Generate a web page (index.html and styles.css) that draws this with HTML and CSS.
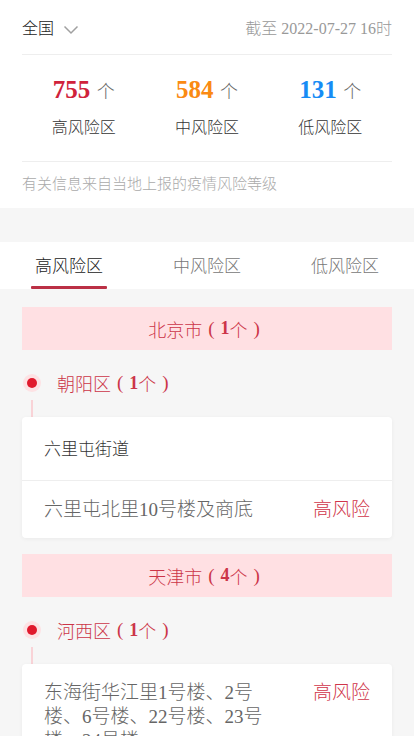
FILE: index.html
```html
<!DOCTYPE html>
<html lang="zh">
<head>
<meta charset="utf-8">
<title>风险等级</title>
<link rel="stylesheet" href="styles.css">
</head>
<body>
<div class="top">
  <div class="header">
    <div class="region">全国
      <svg class="chev" width="16" height="10" viewBox="0 0 16 10"><polyline points="1.5,1.5 8,8 14.5,1.5" fill="none" stroke="#a0a0a0" stroke-width="1.5"/></svg>
    </div>
    <div class="time">截至 2022-07-27 16时</div>
  </div>
  <div class="stats">
    <div class="stat"><div class="num"><b class="high">755</b> 个</div><div class="label">高风险区</div></div>
    <div class="stat"><div class="num"><b class="mid">584</b> 个</div><div class="label">中风险区</div></div>
    <div class="stat"><div class="num"><b class="low">131</b> 个</div><div class="label">低风险区</div></div>
  </div>
  <div class="note">有关信息来自当地上报的疫情风险等级</div>
</div>

<div class="tabs">
  <div class="tab active">高风险区</div>
  <div class="tab">中风险区</div>
  <div class="tab">低风险区</div>
</div>

<div class="list">
  <div class="city">北京市<span class="p">(</span><b>1</b>个<span class="p">)</span></div>
  <div class="district"><span class="dot"></span>朝阳区<span class="p">(</span><b>1</b>个<span class="p">)</span></div>
  <div class="connector"></div>
  <div class="card">
    <div class="street">六里屯街道</div>
    <div class="item"><div class="addr">六里屯北里10号楼及商底</div><div class="risk">高风险</div></div>
  </div>

  <div class="city">天津市<span class="p">(</span><b>4</b>个<span class="p">)</span></div>
  <div class="district"><span class="dot"></span>河西区<span class="p">(</span><b>1</b>个<span class="p">)</span></div>
  <div class="connector"></div>
  <div class="card">
    <div class="item first"><div class="addr">东海街华江里1号楼、2号楼、6号楼、22号楼、23号楼、24号楼</div><div class="risk">高风险</div></div>
  </div>
</div>
</body>
</html>
```

FILE: styles.css
```css
* { box-sizing: border-box; }
body {
  margin: 0;
  background: #f6f6f6;
  font-family: "Liberation Serif", "Noto Sans CJK SC", serif;
  font-weight: 300;
  color: #333;
}
.top {
  background: #fff;
  padding: 0 22px;
}
.header {
  display: flex;
  justify-content: space-between;
  align-items: center;
  padding: 18px 0 14px;
  line-height: 22px;
  border-bottom: 1px solid #eeeeee;
}
.region {
  font-size: 16px;
  color: #222;
  display: flex;
  align-items: center;
}
.chev { margin-left: 9px; margin-top: 2px; }
.time {
  font-size: 16px;
  color: #999;
}
.stats {
  display: grid;
  grid-template-columns: 1fr 1fr 1fr;
  padding: 20px 0 22px;
  border-bottom: 1px solid #eeeeee;
}
.stat {
  display: flex;
  flex-direction: column;
  align-items: center;
}
.num {
  font-size: 18px;
  color: #666;
  line-height: 30px;
  height: 30px;
}
.num b {
  font-size: 25px;
  font-weight: bold;
  margin-right: 2px;
}
.high { color: #d0223b; }
.mid { color: #fa8a12; }
.low { color: #168cf5; }
.label {
  font-size: 16px;
  color: #333;
  line-height: 22px;
  margin-top: 12px;
}
.note {
  font-size: 15px;
  color: #aaa;
  line-height: 20px;
  padding: 12px 0 14px;
}
.tabs {
  margin-top: 34px;
  background: #fff;
  display: grid;
  grid-template-columns: 1fr 1fr 1fr;
  height: 47px;
}
.tab {
  font-size: 17px;
  color: #777;
  display: flex;
  justify-content: center;
  align-items: center;
  position: relative;
  padding-bottom: 2px;
}
.tab.active { color: #222; }
.tab.active::after {
  content: "";
  position: absolute;
  bottom: 0;
  left: 31px;
  width: 76px;
  height: 3px;
  background: #bb3045;
  border-radius: 1px;
}
.list {
  padding: 18px 22px 0;
}
.city {
  background: #ffe0e3;
  height: 43px;
  display: flex;
  justify-content: center;
  align-items: center;
  font-size: 18px;
  color: #cc3548;
  margin-bottom: 16px;
}
.p { margin: 0 6px; font-size: 19px; }
.city b, .district b { font-weight: bold; }
.district {
  display: flex;
  align-items: center;
  height: 34px;
  font-size: 18px;
  color: #cc3548;
}
.dot {
  width: 10px;
  height: 10px;
  border-radius: 50%;
  background: #e01a2d;
  box-shadow: 0 0 0 4px #fde2e4;
  margin-left: 5px;
  margin-right: 20px;
}
.connector {
  width: 2px;
  height: 17px;
  margin-left: 9px;
  background: #f9d3d7;
}
.card {
  background: #fff;
  border-radius: 4px;
  box-shadow: 0 1px 4px rgba(0,0,0,0.05);
  margin-bottom: 16px;
}
.street {
  font-size: 17px;
  color: #333;
  line-height: 22px;
  padding: 22px 22px 19px;
  border-bottom: 1px solid #eeeeee;
}
.item {
  display: flex;
  justify-content: space-between;
  align-items: flex-start;
  padding: 17px 22px 16px;
  font-size: 19px;
  line-height: 24px;
}
.addr {
  color: #666;
  flex: 1;
  margin-right: 47px;
}
.risk {
  color: #d0354a;
  white-space: nowrap;
}
```
